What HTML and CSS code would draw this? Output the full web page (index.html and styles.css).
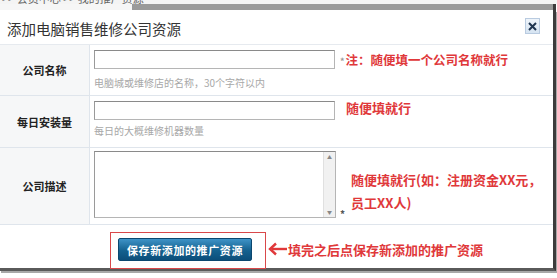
FILE: index.html
```html
<!DOCTYPE html>
<html lang="zh-CN">
<head>
<meta charset="utf-8">
<title>添加电脑销售维修公司资源</title>
<link rel="stylesheet" href="styles.css">
</head>
<body>
<div class="page">
  <div class="crumb"><span class="crumb-text">&gt;&gt; 会员中心 &gt;&gt; 我的推广资源</span></div>
  <div class="bar-row"><div class="bar-gap"></div><div class="bar"></div></div>
  <div class="dialog">
    <div class="title-row">
      <div class="title">添加电脑销售维修公司资源</div>
      <div class="close">
        <svg width="9" height="9" viewBox="0 0 9 9"><path d="M1 1 L8 8 M8 1 L1 8" stroke="#1f3550" stroke-width="2" fill="none"/></svg>
      </div>
    </div>
    <div class="form">
      <div class="row row-1">
        <div class="label">公司名称</div>
        <div class="field">
          <div class="line">
            <div class="input"></div>
            <div class="note note-1"><span class="star-s">*</span>注：随便填一个公司名称就行</div>
          </div>
          <div class="hint">电脑城或维修店的名称，30个字符以内</div>
        </div>
      </div>
      <div class="row row-2">
        <div class="label">每日安装量</div>
        <div class="field">
          <div class="line">
            <div class="input"></div>
            <div class="note note-2">随便填就行</div>
          </div>
          <div class="hint">每日的大概维修机器数量</div>
        </div>
      </div>
      <div class="row row-3">
        <div class="label">公司描述</div>
        <div class="field field-3">
          <div class="textarea">
            <div class="ta-body"></div>
            <div class="scroll"><span class="sa">▲</span><span class="sa">▼</span></div>
          </div>
          <div class="star">*</div>
          <div class="note note-3">随便填就行(如：注册资金XX元，<br>员工XX人)</div>
        </div>
      </div>
    </div>
    <div class="footer">
      <div class="redbox"><div class="btn">保存新添加的推广资源</div></div>
      <svg class="arrow" width="20" height="14" viewBox="0 0 20 14"><path d="M19 7 H4" stroke="#e0383a" stroke-width="2.4" fill="none"/><path d="M8 1.5 L2 7 L8 12.5" stroke="#e0383a" stroke-width="2.4" fill="none" stroke-linejoin="miter"/></svg>
      <div class="note note-f">填完之后点保存新添加的推广资源</div>
    </div>
  </div>
</div>
</body>
</html>
```
FILE: styles.css
```css
html, body {
  margin: 0;
  padding: 0;
  background: #ffffff;
}
body {
  font-family: "Noto Sans CJK SC", "Liberation Sans", sans-serif;
  color: #333;
}
.page {
  width: 557px;
  height: 278px;
  overflow: hidden;
}
.crumb {
  height: 4px;
  overflow: hidden;
  display: flex;
  align-items: flex-end;
  background: #f4f4f4;
  padding-left: 2px;
}
.crumb-text {
  font-size: 11px;
  line-height: 12px;
  color: #666;
  white-space: nowrap;
}
.bar-row {
  display: flex;
  height: 6px;
  width: 556px;
}
.bar-gap {
  width: 132px;
  background: #f6f6f6;
}
.bar {
  flex: 1;
  background: #9a9a9a;
  border-right: 3px solid #3c3c3c;
}
.dialog {
  width: 553px;
  height: 258px;
  background: #fff;
  border-right: 3px solid #3c3c3c;
  border-bottom: 3px solid #5a5a5a;
  box-shadow: 1px 2px 0 #a8a8a8;
  display: flex;
  flex-direction: column;
}
.title-row {
  height: 35px;
  border-bottom: 1px solid #e6eaef;
  display: flex;
  align-items: center;
  justify-content: space-between;
  padding: 0 13px 0 7px;
  box-sizing: border-box;
  flex: none;
}
.title {
  font-size: 14.5px;
  color: #333;
  margin-top: 2px;
}
.close {
  width: 15px;
  height: 16px;
  box-sizing: border-box;
  border: 1px solid #b9cbe0;
  background: linear-gradient(#eef4fa, #d6e4f2);
  display: flex;
  align-items: center;
  justify-content: center;
  margin-top: -2px;
}
.form {
  display: flex;
  flex-direction: column;
}
.row {
  display: grid;
  grid-template-columns: 90px 1fr;
  border-bottom: 1px solid #dfe5ec;
}
.row-1 { height: 50px; }
.row-2 { height: 51px; }
.row-3 { height: 76px; }
.label {
  background: #f6f7f8;
  border-right: 1px solid #dfe5ec;
  display: flex;
  align-items: center;
  justify-content: center;
  font-size: 11px;
  font-weight: bold;
  color: #222;
}
.field {
  padding: 5px 0 0 4px;
  display: flex;
  flex-direction: column;
}
.line {
  display: flex;
  align-items: center;
}
.input {
  width: 241px;
  height: 19px;
  box-sizing: border-box;
  border: 1px solid #b5b5b5;
  border-top-color: #8a8a8a;
  border-left-color: #9a9a9a;
  background: #fff;
}
.note {
  color: #e0383a;
  font-size: 13px;
  font-weight: bold;
  white-space: nowrap;
}
.note-1 {
  margin-left: 5px;
  font-size: 12.5px;
}
.star-s {
  font-size: 9px;
  color: #999;
  margin-right: 1px;
}
.note-2 {
  margin-left: 11px;
  margin-top: -7px;
}
.hint {
  margin-top: 8px;
  font-size: 10px;
  line-height: 12px;
  color: #a8a8a8;
}
.row-2 .hint { margin-top: 5px; }
.field-3 {
  flex-direction: row;
  align-items: flex-start;
  padding-top: 3px;
}
.textarea {
  width: 242px;
  height: 67px;
  box-sizing: border-box;
  border: 1px solid #b5b5b5;
  border-top-color: #8a8a8a;
  border-left-color: #9a9a9a;
  display: flex;
}
.ta-body { flex: 1; }
.scroll {
  width: 11px;
  background: #f1f1f1;
  border-left: 1px solid #e0e0e0;
  display: flex;
  flex-direction: column;
  justify-content: space-between;
  align-items: center;
  padding: 2px 0;
}
.sa {
  font-size: 5px;
  line-height: 6px;
  color: #888;
}
.star {
  align-self: flex-end;
  margin: 0 0 3px 4px;
  font-size: 10px;
  color: #555;
  font-weight: bold;
}
.note-3 {
  margin-left: 6px;
  margin-top: 17px;
  line-height: 23px;
  font-size: 13px;
}
.footer {
  flex: 1;
  display: flex;
  align-items: flex-start;
  padding: 7px 0 0 110px;
}
.redbox {
  border: 1px solid #d9484a;
  padding: 5px 13px 7px 7px;
}
.btn {
  width: 134px;
  height: 23px;
  box-sizing: border-box;
  border: 1px solid #0b476f;
  border-radius: 2px;
  background: linear-gradient(#3e93c7, #14618f 55%, #0c4e7a);
  color: #fff;
  font-size: 11px;
  font-weight: bold;
  letter-spacing: 0.6px;
  display: flex;
  align-items: center;
  justify-content: center;
}
.arrow {
  margin: 10px 0 0 2px;
}
.note-f {
  margin-top: 8px;
}
```
